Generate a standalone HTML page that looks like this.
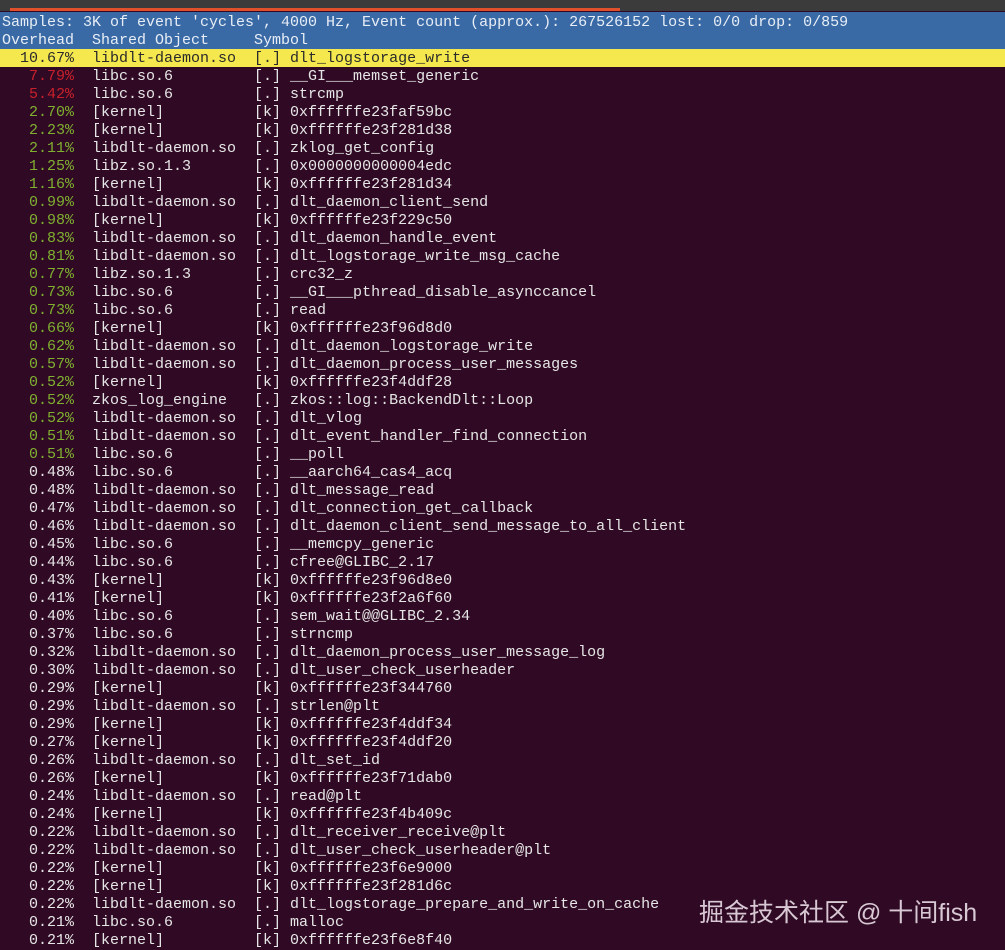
<!DOCTYPE html>
<html><head><meta charset="utf-8"><style>
html,body{margin:0;padding:0;}
body{width:1005px;height:950px;background:#300a24;overflow:hidden;position:relative;font-family:"Liberation Mono","DejaVu Sans Mono",monospace;}
.top{position:absolute;left:0;top:0;width:1005px;height:11px;background:#3b3b3b;}
.top i{position:absolute;left:10px;top:8px;width:610px;height:3px;background:#e0502a;}
.blue{position:absolute;left:0;top:12px;width:1005px;height:37px;background:#3a6aa6;}
.yel{position:absolute;left:0;top:49px;width:1005px;height:18px;background:#f5e84e;}
pre{position:absolute;left:2px;top:14px;margin:0;font-size:15px;line-height:18px;color:#e6e6e6;font-family:inherit;}
.h{color:#e8eef6}
.s{color:#2a2a2a}
.r{color:#c8202a}
.g{color:#7fb030}
.wm{position:absolute;left:699px;top:893px;font-family:"Liberation Sans","Noto Sans CJK SC",sans-serif;font-size:25px;color:#d8c8d4;}
</style></head><body>
<div class="top"><i></i></div>
<div class="blue"></div>
<div class="yel"></div>
<pre><span class="h">Samples: 3K of event 'cycles', 4000 Hz, Event count (approx.): 267526152 lost: 0/0 drop: 0/859
Overhead  Shared Object     Symbol</span>
<span class="s">  10.67%  libdlt-daemon.so  [.] dlt_logstorage_write</span>
<span class="r">   7.79%</span>  libc.so.6         [.] __GI___memset_generic
<span class="r">   5.42%</span>  libc.so.6         [.] strcmp
<span class="g">   2.70%</span>  [kernel]          [k] 0xffffffe23faf59bc
<span class="g">   2.23%</span>  [kernel]          [k] 0xffffffe23f281d38
<span class="g">   2.11%</span>  libdlt-daemon.so  [.] zklog_get_config
<span class="g">   1.25%</span>  libz.so.1.3       [.] 0x0000000000004edc
<span class="g">   1.16%</span>  [kernel]          [k] 0xffffffe23f281d34
<span class="g">   0.99%</span>  libdlt-daemon.so  [.] dlt_daemon_client_send
<span class="g">   0.98%</span>  [kernel]          [k] 0xffffffe23f229c50
<span class="g">   0.83%</span>  libdlt-daemon.so  [.] dlt_daemon_handle_event
<span class="g">   0.81%</span>  libdlt-daemon.so  [.] dlt_logstorage_write_msg_cache
<span class="g">   0.77%</span>  libz.so.1.3       [.] crc32_z
<span class="g">   0.73%</span>  libc.so.6         [.] __GI___pthread_disable_asynccancel
<span class="g">   0.73%</span>  libc.so.6         [.] read
<span class="g">   0.66%</span>  [kernel]          [k] 0xffffffe23f96d8d0
<span class="g">   0.62%</span>  libdlt-daemon.so  [.] dlt_daemon_logstorage_write
<span class="g">   0.57%</span>  libdlt-daemon.so  [.] dlt_daemon_process_user_messages
<span class="g">   0.52%</span>  [kernel]          [k] 0xffffffe23f4ddf28
<span class="g">   0.52%</span>  zkos_log_engine   [.] zkos::log::BackendDlt::Loop
<span class="g">   0.52%</span>  libdlt-daemon.so  [.] dlt_vlog
<span class="g">   0.51%</span>  libdlt-daemon.so  [.] dlt_event_handler_find_connection
<span class="g">   0.51%</span>  libc.so.6         [.] __poll
   0.48%  libc.so.6         [.] __aarch64_cas4_acq
   0.48%  libdlt-daemon.so  [.] dlt_message_read
   0.47%  libdlt-daemon.so  [.] dlt_connection_get_callback
   0.46%  libdlt-daemon.so  [.] dlt_daemon_client_send_message_to_all_client
   0.45%  libc.so.6         [.] __memcpy_generic
   0.44%  libc.so.6         [.] cfree@GLIBC_2.17
   0.43%  [kernel]          [k] 0xffffffe23f96d8e0
   0.41%  [kernel]          [k] 0xffffffe23f2a6f60
   0.40%  libc.so.6         [.] sem_wait@@GLIBC_2.34
   0.37%  libc.so.6         [.] strncmp
   0.32%  libdlt-daemon.so  [.] dlt_daemon_process_user_message_log
   0.30%  libdlt-daemon.so  [.] dlt_user_check_userheader
   0.29%  [kernel]          [k] 0xffffffe23f344760
   0.29%  libdlt-daemon.so  [.] strlen@plt
   0.29%  [kernel]          [k] 0xffffffe23f4ddf34
   0.27%  [kernel]          [k] 0xffffffe23f4ddf20
   0.26%  libdlt-daemon.so  [.] dlt_set_id
   0.26%  [kernel]          [k] 0xffffffe23f71dab0
   0.24%  libdlt-daemon.so  [.] read@plt
   0.24%  [kernel]          [k] 0xffffffe23f4b409c
   0.22%  libdlt-daemon.so  [.] dlt_receiver_receive@plt
   0.22%  libdlt-daemon.so  [.] dlt_user_check_userheader@plt
   0.22%  [kernel]          [k] 0xffffffe23f6e9000
   0.22%  [kernel]          [k] 0xffffffe23f281d6c
   0.22%  libdlt-daemon.so  [.] dlt_logstorage_prepare_and_write_on_cache
   0.21%  libc.so.6         [.] malloc
   0.21%  [kernel]          [k] 0xffffffe23f6e8f40</pre>
<div class="wm">掘金技术社区 @ 十间fish</div>
</body></html>
